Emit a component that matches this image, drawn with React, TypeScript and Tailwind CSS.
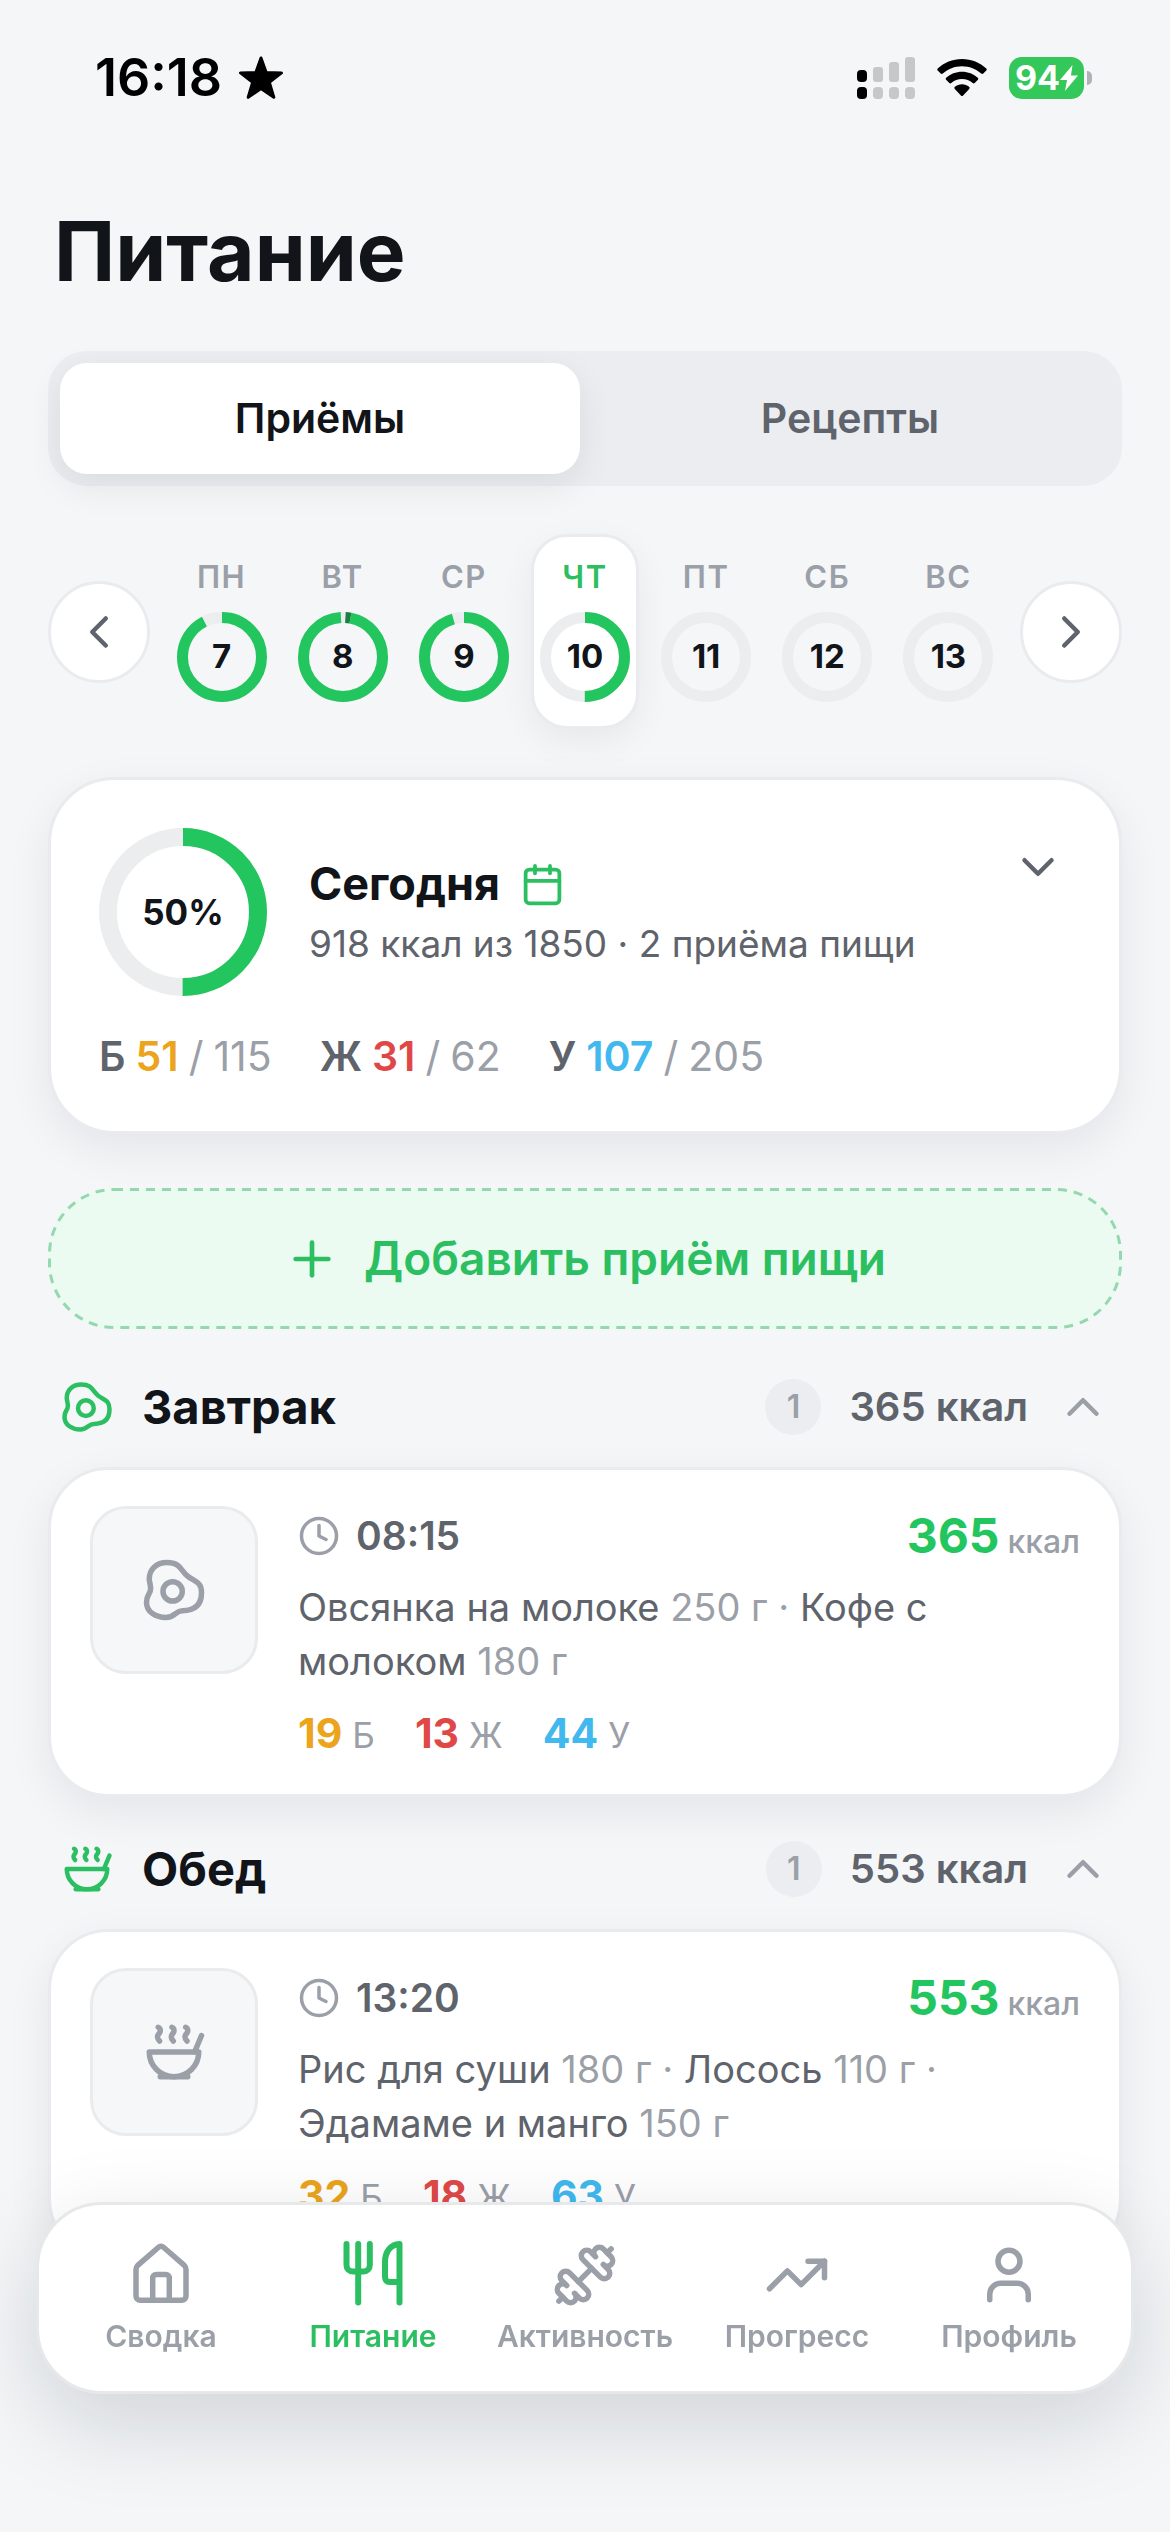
import React, { useState } from 'react';
import {
  Calendar,
  ChevronDown,
  ChevronLeft,
  ChevronRight,
  ChevronUp,
  Clock,
  Dumbbell,
  EggFried,
  Plus,
  Soup,
  TrendingUp,
  User,
} from 'lucide-react';

type IconType = React.ComponentType<{ className?: string; strokeWidth?: number }>;

interface Day {
  label: string;
  date: number;
  percent: number;
}

interface Product {
  name: string;
  grams: number;
}

interface Meal {
  title: string;
  icon: IconType;
  time: string;
  kcal: number;
  products: Product[];
  protein: number;
  fat: number;
  carbs: number;
}

const days: Day[] = [
  { label: 'ПН', date: 7, percent: 92.5 },
  { label: 'ВТ', date: 8, percent: 102 },
  { label: 'СР', date: 9, percent: 95.5 },
  { label: 'ЧТ', date: 10, percent: 50 },
  { label: 'ПТ', date: 11, percent: 0 },
  { label: 'СБ', date: 12, percent: 0 },
  { label: 'ВС', date: 13, percent: 0 },
];

const totals = [
  { label: 'Б', value: 51, goal: 115, color: 'text-[#eba41c]' },
  { label: 'Ж', value: 31, goal: 62, color: 'text-[#e04848]' },
  { label: 'У', value: 107, goal: 205, color: 'text-[#41b8ee]' },
];

const meals: Meal[] = [
  {
    title: 'Завтрак',
    icon: EggFried,
    time: '08:15',
    kcal: 365,
    products: [
      { name: 'Овсянка на молоке', grams: 250 },
      { name: 'Кофе с молоком', grams: 180 },
    ],
    protein: 19,
    fat: 13,
    carbs: 44,
  },
  {
    title: 'Обед',
    icon: Soup,
    time: '13:20',
    kcal: 553,
    products: [
      { name: 'Рис для суши', grams: 180 },
      { name: 'Лосось', grams: 110 },
      { name: 'Эдамаме и манго', grams: 150 },
    ],
    protein: 32,
    fat: 18,
    carbs: 63,
  },
];

const HomeIcon: IconType = ({ className }) => (
  <svg viewBox="0 0 66 66" className={className} fill="none" stroke="currentColor" strokeWidth="5.5" strokeLinecap="round" strokeLinejoin="round">
    <path d="M8 27.500c0-1.600.6-3 1.700-4.100L30.500 5.200c1.400-1.300 3.600-1.300 5 0l20.800 18.200c1.100 1.100 1.700 2.500 1.700 4.100V54c0 2.500-1.900 4.300-4.300 4.300H12.300C9.900 58.300 8 56.500 8 54Z" />
    <path d="M24.700 58V36c0-2 1.500-3.600 3.500-3.600h9.600c2 0 3.500 1.600 3.500 3.600v22" />
  </svg>
);

const ForkKnifeIcon: IconType = ({ className }) => (
  <svg viewBox="0 0 66 66" className={className} fill="none" stroke="currentColor" strokeWidth="6" strokeLinecap="round" strokeLinejoin="round">
    <path d="M6.500 2v21c0 3.800 2.600 6.500 6.500 6.500h10.300c3.900 0 6.500-2.700 6.500-6.500V2M18.200 2v58.500" />
    <path d="M59.500 60.500V2C50.500 2.500 45 10 45 20v15c0 3 1.800 5 4.500 5h10" />
  </svg>
);

const navItems: { label: string; icon: IconType; href: string }[] = [
  { label: 'Сводка', icon: HomeIcon, href: '#summary' },
  { label: 'Питание', icon: ForkKnifeIcon, href: '#nutrition' },
  { label: 'Активность', icon: Dumbbell, href: '#activity' },
  { label: 'Прогресс', icon: TrendingUp, href: '#progress' },
  { label: 'Профиль', icon: User, href: '#profile' },
];

const Ring: React.FC<{ percent: number; size: number; width: number; className: string; children: React.ReactNode }> = ({
  percent,
  size,
  width,
  className,
  children,
}) => {
  const c = size / 2;
  const r = (size - width) / 2;
  const full = 2 * Math.PI * r;
  const arc = { cx: c, cy: c, r, strokeWidth: width };
  const over = percent > 100;
  const filled = over ? 0.96 : percent / 100;

  return (
    <span className={`relative flex items-center justify-center ${className}`}>
      <svg viewBox={`0 0 ${size} ${size}`} className="absolute inset-0 h-full w-full -rotate-90" fill="none">
        <circle {...arc} className="stroke-[#ebedef]" />
        {percent > 0 && (
          <circle
            {...arc}
            className="stroke-[#23c65e]"
            strokeDasharray={`${full * filled} ${full}`}
            strokeDashoffset={over ? -full * 0.03 : 0}
          />
        )}
        {/* Overshoot past the daily goal */}
        {over && (
          <circle
            {...arc}
            className="stroke-[#1b7f42]"
            strokeDasharray={`${(full * (percent - 100)) / 100} ${full}`}
            strokeDashoffset={-full * 0.01}
          />
        )}
      </svg>
      <span className="relative">{children}</span>
    </span>
  );
};

const StatusBar: React.FC = () => (
  <div className="flex h-[156px] items-center justify-between pr-[30px] pl-[47px] text-black">
    <div className="flex items-center gap-4">
      <span className="text-[52px] leading-[60px] font-semibold">16:18</span>
      <svg viewBox="0 0 46 44" className="h-11 w-[46px]" fill="currentColor" stroke="currentColor" strokeWidth="3" strokeLinejoin="round">
        <path d="M23 2l5.200 14.500 15.300.4-12.200 9.400 4.500 15L23 32.500 10.200 41.300l4.500-15L2.500 16.900l15.300-.4Z" />
      </svg>
    </div>
    <div className="flex items-center gap-[22px]">
      <svg viewBox="0 0 58 42" className="h-[42px] w-[58px]">
        <rect x="0" y="13" width="10" height="12" rx="4" />
        <rect x="0" y="30" width="10" height="12" rx="4" />
        <g fill="#c6c7c9">
          <rect x="16" y="10" width="10" height="15" rx="3" />
          <rect x="32" y="5" width="10" height="20" rx="3" />
          <rect x="48" y="0" width="10" height="25" rx="3" />
          <rect x="16" y="30" width="10" height="12" rx="4" />
          <rect x="32" y="30" width="10" height="12" rx="4" />
          <rect x="48" y="30" width="10" height="12" rx="4" />
        </g>
      </svg>
      <svg viewBox="0 0 50 38" className="h-[38px] w-[50px]" fill="currentColor">
        <path d="M25 0C15.500 0 7 3.600.700 9.500c-.6.6-.6 1.500 0 2.100l3 3c.6.6 1.500.6 2.100 0C10.900 9.900 17.600 7.200 25 7.200s14.100 2.700 19.200 7.400c.6.6 1.500.6 2.100 0l3-3c.6-.6.6-1.500 0-2.100C43 3.600 34.500 0 25 0Z" />
        <path d="M25 12.700c-6.100 0-11.600 2.300-15.800 6-.6.6-.7 1.500-.1 2.100l3.200 3.200c.6.6 1.400.6 2 .1 2.900-2.500 6.600-4 10.700-4s7.800 1.500 10.700 4c.6.5 1.400.5 2-.1l3.200-3.200c.6-.6.5-1.500-.1-2.100-4.200-3.700-9.700-6-15.800-6Z" />
        <path d="M25 25.200c-2.700 0-5.200 1-7.100 2.600-.7.6-.7 1.500-.1 2.100l6.100 6.500c.6.7 1.600.7 2.200 0l6.100-6.500c.6-.6.6-1.500-.1-2.100-1.900-1.600-4.400-2.600-7.100-2.600Z" />
      </svg>
      <div className="flex items-center gap-[3px]">
        <div className="flex h-[42px] w-[75px] items-center justify-center rounded-[13px] bg-[#34c759] text-[34px] leading-[42px] font-bold text-white">
          94
          <svg viewBox="0 0 18 26" className="h-[26px] w-[18px]" fill="currentColor">
            <path d="M12.500 0 0 15h7L5 26 18 10.500h-7Z" />
          </svg>
        </div>
        <span className="h-[14px] w-[5px] rounded-r-full bg-[#b0b3b6]" />
      </div>
    </div>
  </div>
);

const MealSection: React.FC<{ meal: Meal }> = ({ meal }) => {
  const [open, setOpen] = useState(true);
  const Icon = meal.icon;
  const Chevron = open ? ChevronUp : ChevronDown;

  const macros = [
    { value: meal.protein, unit: 'Б', color: 'text-[#eba41c]' },
    { value: meal.fat, unit: 'Ж', color: 'text-[#e04848]' },
    { value: meal.carbs, unit: 'У', color: 'text-[#41b8ee]' },
  ];

  return (
    <section>
      <button onClick={() => setOpen(!open)} className="flex h-[60px] w-full items-center px-3 text-left">
        <Icon className="h-[54px] w-[54px] text-[#2bbf62]" />
        <h2 className="ml-7 flex-1 text-[47px] leading-[60px] font-bold">{meal.title}</h2>
        <span className="flex h-14 w-14 items-center justify-center rounded-full bg-[#ebedf0] text-[32px] font-semibold text-[#9b9fa8]">
          1
        </span>
        <span className="ml-7 text-[40px] leading-[60px] font-semibold text-[#5f636b]">{meal.kcal} ккал</span>
        <Chevron className="ml-7 h-[54px] w-[54px] text-[#9b9fa8]" />
      </button>

      {open && (
        <article className="mt-[30px] flex gap-10 rounded-[60px] border-3 border-[#e9ebee] bg-white bg-clip-padding px-[39px] py-9 shadow-[0_15px_45px_rgba(16,20,24,0.07)]">
          <div className="flex h-[168px] w-[168px] shrink-0 items-center justify-center rounded-[36px] border-3 border-[#e9ebed] bg-[#f5f7f9] text-[#9b9fa8]">
            <Icon className="h-[66px] w-[66px]" />
          </div>
          <div className="min-w-0 flex-1">
            <div className="flex h-[60px] items-center justify-between">
              <div className="flex items-center gap-4">
                <Clock className="h-[42px] w-[42px] text-[#9b9fa8]" />
                <span className="text-[39px] leading-[60px] font-semibold text-[#5f636b]">{meal.time}</span>
              </div>
              <div className="flex items-baseline gap-2">
                <span className="text-[48px] leading-[60px] font-bold text-[#23c65e]">{meal.kcal}</span>
                <span className="text-[32px] leading-10 font-medium text-[#9b9fa8]">ккал</span>
              </div>
            </div>
            <p className="mt-[14px] pr-24 text-[38px] leading-[54px] text-[#9b9fa8]">
              {meal.products.map((p, i) => (
                <React.Fragment key={p.name}>
                  <span className="text-[#5f636b]">{p.name}</span> {p.grams} г{i < meal.products.length - 1 && ' · '}
                </React.Fragment>
              ))}
            </p>
            <div className="mt-5 flex h-[50px] gap-10">
              {macros.map((m) => (
                <span key={m.unit} className="flex items-baseline gap-[10px] text-[35px] leading-[50px] text-[#9b9fa8]">
                  <b className={`text-[41px] leading-[50px] font-bold ${m.color}`}>{m.value}</b>
                  {m.unit}
                </span>
              ))}
            </div>
          </div>
        </article>
      )}
    </section>
  );
};

const App: React.FC = () => {
  const [tab, setTab] = useState('Приёмы');
  const [selected, setSelected] = useState(10);

  return (
    <div className="min-h-screen bg-[#f4f6f8] px-12 pb-[270px] font-['Inter',sans-serif] text-[#111418]">
      <StatusBar />

      <h1 className="mt-12 pl-[6px] text-[82px] leading-[96px] font-bold">Питание</h1>

      {/* Tabs */}
      <div className="mt-[51px] flex h-[135px] gap-[10px] rounded-[39px] bg-[#ebedf1] p-3">
        {['Приёмы', 'Рецепты'].map((name) => (
          <button
            key={name}
            onClick={() => setTab(name)}
            className={`flex-1 rounded-[27px] text-[41px] font-semibold ${
              tab === name ? 'bg-white shadow-[0_12px_36px_rgba(16,20,24,0.08)]' : 'text-[#5f636b]'
            }`}
          >
            {name}
          </button>
        ))}
      </div>

      {/* Week */}
      <div className="mt-12 flex items-center gap-[18px]">
        <button
          aria-label="Предыдущая неделя"
          className="flex h-[102px] w-[102px] shrink-0 items-center justify-center rounded-full border-3 border-[#e9ebee] bg-white text-[#5f636b]"
        >
          <ChevronLeft className="h-[54px] w-[54px]" />
        </button>
        <div className="flex flex-1 gap-[14px]">
          {days.map((day) => {
            const active = day.date === selected;
            return (
              <button
                key={day.date}
                onClick={() => setSelected(day.date)}
                className={`flex h-[195px] flex-1 flex-col items-center rounded-[36px] border-3 pt-5 ${
                  active
                    ? 'border-[#e9ebee] bg-white shadow-[0_12px_36px_rgba(16,20,24,0.06)]'
                    : 'border-transparent'
                }`}
              >
                <span
                  className={`text-[31px] leading-10 font-semibold tracking-wider ${
                    active ? 'text-[#2bbf62]' : 'text-[#9b9fa8]'
                  }`}
                >
                  {day.label}
                </span>
                <Ring percent={day.percent} size={90} width={11} className="mt-[15px] h-[90px] w-[90px] text-[33px] font-bold">
                  {day.date}
                </Ring>
              </button>
            );
          })}
        </div>
        <button
          aria-label="Следующая неделя"
          className="flex h-[102px] w-[102px] shrink-0 items-center justify-center rounded-full border-3 border-[#e9ebee] bg-white text-[#5f636b]"
        >
          <ChevronRight className="h-[54px] w-[54px]" />
        </button>
      </div>

      {/* Day summary */}
      <section className="mt-12 rounded-[66px] border-3 border-[#e9ebee] bg-white bg-clip-padding px-12 pt-12 pb-[51px] shadow-[0_15px_45px_rgba(16,20,24,0.07)]">
        <div className="flex">
          <Ring percent={50} size={168} width={18} className="h-[168px] w-[168px] shrink-0 text-[35px] font-bold">
            50%
          </Ring>
          <div className="ml-[42px] flex flex-1 flex-col justify-center pt-1">
            <div className="flex items-center gap-5">
              <h2 className="text-[45px] leading-[60px] font-bold">Сегодня</h2>
              <Calendar className="h-[45px] w-[45px] text-[#2bbf62]" />
            </div>
            <p className="text-[37px] leading-[60px] text-[#5f636b]">918 ккал из 1850 · 2 приёма пищи</p>
          </div>
          <button aria-label="Развернуть" className="flex h-[78px] w-[66px] items-center justify-center text-[#5f636b]">
            <ChevronDown className="h-[54px] w-[54px]" />
          </button>
        </div>
        <div className="mt-9 flex gap-12 text-[41px] leading-[48px] text-[#9b9fa8]">
          {totals.map((t) => (
            <span key={t.label} className="flex gap-[10px]">
              <b className="font-semibold text-[#5f636b]">{t.label}</b>
              <b className={`font-semibold ${t.color}`}>{t.value}</b>
              <span>/</span>
              <span>{t.goal}</span>
            </span>
          ))}
        </div>
      </section>

      <button className="relative mt-[54px] flex h-[141px] w-full items-center justify-center gap-6 rounded-[66px] bg-[#ebfbf1] text-[46px] font-semibold text-[#2bbf62]">
        {/* Dashed outline, longer dashes than border-dashed gives */}
        <svg className="absolute inset-0 h-full w-full overflow-visible" fill="none" aria-hidden="true">
          <rect
            x="1.5"
            y="1.5"
            rx="64.5"
            className="h-[calc(100%-3px)] w-[calc(100%-3px)] stroke-[#95d8b0]"
            strokeWidth="3"
            strokeDasharray="9 7"
          />
        </svg>
        <Plus className="h-14 w-14" />
        Добавить приём пищи
      </button>

      <div className="mt-12 flex flex-col gap-[42px]">
        {meals.map((meal) => (
          <MealSection key={meal.title} meal={meal} />
        ))}
      </div>

      <nav className="fixed right-9 bottom-[138px] left-9 flex h-48 rounded-[66px] border-3 border-[#e6e8ea] bg-white px-4 shadow-[0_30px_90px_rgba(16,20,24,0.15)]">
        {navItems.map(({ label, icon: Icon, href }) => (
          <a
            key={label}
            href={href}
            className={`flex flex-1 basis-0 flex-col items-center justify-center gap-[10px] text-[30px] leading-9 font-semibold ${
              label === 'Питание' ? 'text-[#2bbf62]' : 'text-[#9b9fa8]'
            }`}
          >
            <Icon className="h-[66px] w-[66px] overflow-visible" />
            {label}
          </a>
        ))}
      </nav>
    </div>
  );
};

export default App;
